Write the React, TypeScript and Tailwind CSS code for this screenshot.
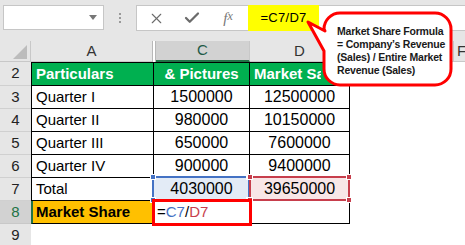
import React from 'react';
import { X, Check } from 'lucide-react';

const rows = [
  { n: 3, name: 'Quarter I', c: '1500000', d: '12500000' },
  { n: 4, name: 'Quarter II', c: '980000', d: '10150000' },
  { n: 5, name: 'Quarter III', c: '650000', d: '7600000' },
  { n: 6, name: 'Quarter IV', c: '900000', d: '9400000' },
];

const Handle = ({ pos, color }: { pos: string; color: string }) => (
  <div className={`absolute w-[6px] h-[6px] border border-white ${pos}`} style={{ backgroundColor: color }} />
);

const RowHead = ({ n, active }: { n: number; active?: boolean }) => (
  <div
    className={
      active
        ? 'w-[31px] shrink-0 flex items-center justify-center bg-[#d2d2d2] text-[#217346] border-b border-[#c8c8c8]'
        : 'w-[31px] shrink-0 flex items-center justify-center bg-[#e6e6e6] text-[#222] border-b border-[#d0d0d0]'
    }
  >
    {n}
  </div>
);

const App: React.FC = () => {
  return (
    <div className="relative w-[465px] h-[245px] overflow-hidden bg-white font-['Liberation_Sans',Arial,sans-serif] text-[15px] text-black">
      {/* Formula bar */}
      <div className="h-[41px] bg-[#e6e6e6] flex items-start pt-[5px]">
        <div className="ml-[3px] w-[101px] h-[25px] bg-white border border-[#c6c6c6] flex items-center justify-end pr-[6px]">
          <div className="w-0 h-0 border-l-[4px] border-r-[4px] border-t-[5px] border-l-transparent border-r-transparent border-t-[#777]" />
        </div>
        <div className="w-[32px] h-[25px] flex flex-col items-center justify-center gap-[2px]">
          <div className="w-[2px] h-[2px] bg-[#999]" />
          <div className="w-[2px] h-[2px] bg-[#999]" />
          <div className="w-[2px] h-[2px] bg-[#999]" />
        </div>
        <div className="flex-1 h-[26px] bg-white border-l border-y border-[#c6c6c6] flex items-center">
          <div className="w-[36px] flex justify-center ml-[1px]">
            <X size={17} strokeWidth={1.6} color="#6b6b6b" />
          </div>
          <div className="w-[36px] flex justify-center">
            <Check size={18} strokeWidth={3} color="#6b6b6b" />
          </div>
          <div className="w-[36px] flex justify-center font-['Liberation_Serif',serif] italic text-[15px] text-[#777]">
            f<span className="text-[12px]">x</span>
          </div>
          <div className="ml-[2px] w-[71px] h-[26px] bg-[#ffff00] flex items-center justify-center text-[13px] tracking-[0.3px]">
            =C7/D7
          </div>
        </div>
      </div>

      {/* Column headers */}
      <div className="h-[21px] flex text-[15px] text-[#333]">
        <div className="w-[31px] shrink-0 bg-[#e6e6e6] border-r border-b border-[#c8c8c8] flex items-end justify-end pr-[3px] pb-[2px]">
          <svg width="14" height="14">
            <polygon points="14,0 14,14 0,14" fill="#bcbcbc" />
          </svg>
        </div>
        <div className="w-[121px] shrink-0 bg-[#e6e6e6] border-b border-[#c8c8c8] flex items-center justify-center">A</div>
        <div className="w-[4px] shrink-0 bg-white border-x border-[#b8b8b8]" />
        <div className="w-[94px] shrink-0 bg-[#d2d2d2] border-b-2 border-r border-b-[#217346] border-r-[#c8c8c8] flex items-center justify-center text-[#1e5a46]">C</div>
        <div className="w-[100px] shrink-0 bg-[#e6e6e6] border-b border-r border-[#c8c8c8] flex items-center justify-center">D</div>
        <div className="w-[104px] shrink-0 bg-[#e6e6e6] border-b border-r border-[#c8c8c8]" />
        <div className="flex-1 bg-[#e6e6e6] border-b border-[#c8c8c8] flex items-center pl-[3px]">F</div>
      </div>

      {/* Row 2 */}
      <div className="h-[24px] flex">
        <RowHead n={2} />
        <div className="w-[123px] shrink-0 bg-[#00b050] border border-black text-white font-bold flex items-center pl-[4px]">Particulars</div>
        <div className="w-[96px] shrink-0 bg-[#00b050] border-y border-r border-black text-white font-bold flex items-center justify-center whitespace-nowrap overflow-hidden">&amp; Pictures</div>
        <div className="w-[100px] shrink-0 bg-[#00b050] border-y border-r border-black text-white font-bold flex items-center pl-[4px]">
          <span className="w-[67px] overflow-hidden whitespace-nowrap">Market Sales</span>
        </div>
      </div>

      {rows.map((r) => (
        <div key={r.n} className="h-[23px] flex">
          <RowHead n={r.n} />
          <div className="w-[123px] shrink-0 border-x border-b border-black flex items-center pl-[4px]">{r.name}</div>
          <div className="w-[96px] shrink-0 border-r border-b border-black flex items-center justify-center text-[16px]">{r.c}</div>
          <div className="w-[100px] shrink-0 border-r border-b border-black flex items-center justify-center text-[16px]">{r.d}</div>
        </div>
      ))}

      {/* Row 7 */}
      <div className="h-[23px] flex">
        <RowHead n={7} />
        <div className="w-[123px] shrink-0 border-x border-b border-black flex items-center pl-[4px]">Total</div>
        <div className="relative w-[96px] shrink-0 border-r border-b border-black bg-[#e3ebf6] flex items-center justify-center text-[16px]">
          4030000
          <div className="absolute -left-[2px] -top-[2px] -right-[1px] -bottom-[1px] border-2 border-[#4472c4]" />
          <Handle pos="-left-[4px] -top-[4px]" color="#4472c4" />
          <Handle pos="-right-[3px] -top-[4px]" color="#4472c4" />
          <Handle pos="-left-[4px] -bottom-[3px]" color="#4472c4" />
          <Handle pos="-right-[3px] -bottom-[3px]" color="#4472c4" />
        </div>
        <div className="relative w-[100px] shrink-0 border-r border-b border-black bg-[#f8e6e7] flex items-center justify-center text-[16px]">
          39650000
          <div className="absolute -left-[1px] -top-[2px] -right-[1px] -bottom-[1px] border-2 border-[#c73e4c]" />
          <Handle pos="-left-[3px] -top-[4px]" color="#c73e4c" />
          <Handle pos="-right-[3px] -top-[4px]" color="#c73e4c" />
          <Handle pos="-left-[3px] -bottom-[3px]" color="#c73e4c" />
          <Handle pos="-right-[3px] -bottom-[3px]" color="#c73e4c" />
        </div>
      </div>

      {/* Row 8 */}
      <div className="h-[23px] flex">
        <RowHead n={8} active />
        <div className="w-[123px] shrink-0 border-l-2 border-l-[#217346] border-r border-b border-black bg-[#ffc000] font-bold flex items-center pl-[3px] whitespace-nowrap">Market Share</div>
        <div className="relative w-[96px] shrink-0 border-r border-b border-black flex items-center pl-[3px]">
          <span>=</span>
          <span className="text-[#4472c4]">C7</span>
          <span>/</span>
          <span className="text-[#c73e4c]">D7</span>
          <div className="absolute -left-[2px] -top-[2px] -right-[3px] -bottom-[3px] border-[3px] border-[#ff0000]" />
        </div>
        <div className="w-[100px] shrink-0 border-r border-b border-black" />
      </div>

      {/* Row 9 */}
      <div className="h-[23px] flex">
        <RowHead n={9} />
      </div>

      {/* Callout */}
      <svg className="absolute left-[300px] top-[7px]" width="160" height="82" viewBox="0 0 160 82">
        <path
          d="M 25 24 L 8 15 L 24 44 L 24 62 A 16 16 0 0 0 40 78 L 135 78 A 16 16 0 0 0 151 62 L 151 22 A 16 16 0 0 0 135 6 L 40 6 A 16 16 0 0 0 24 22 Z"
          fill="white"
          stroke="#ff0000"
          strokeWidth="3"
          strokeLinejoin="round"
        />
      </svg>
      <div className="absolute left-[337px] top-[25px] text-[10.5px] leading-[13px] font-bold text-[#1a1a1a] whitespace-nowrap tracking-[-0.2px]">
        <div>Market Share Formula</div>
        <div>= Company’s Revenue</div>
        <div>(Sales) / Entire Market</div>
        <div>Revenue (Sales)</div>
      </div>
    </div>
  );
};

export default App;
